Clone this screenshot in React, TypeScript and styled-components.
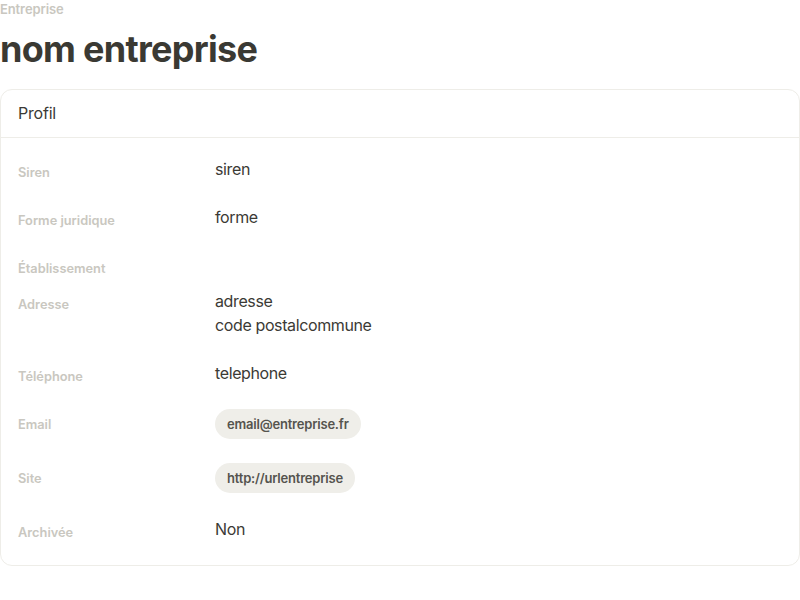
import React from "react";
import styled, { createGlobalStyle } from "styled-components";

const GlobalStyle = createGlobalStyle`
  html, body {
    margin: 0;
    padding: 0;
    background: #fff;
  }
  body {
    font-family: "Inter", "Liberation Sans", sans-serif;
    color: #3b3a35;
  }
`;

const Page = styled.div`
  width: 800px;
  box-sizing: border-box;
`;

const Overline = styled.div`
  font-size: 13px;
  line-height: 18px;
  font-weight: 600;
  letter-spacing: -0.1px;
  color: #c9c7c0;
`;

const Title = styled.h1`
  margin: 9px 0 18px;
  font-size: 36px;
  line-height: 44px;
  font-weight: 700;
  letter-spacing: -0.7px;
  color: #3a3933;
`;

const Card = styled.section`
  border: 1px solid #eeede8;
  border-radius: 12px;
  background: #fff;
`;

const CardHeader = styled.div`
  padding: 11px 17px 12px;
  font-size: 16px;
  line-height: 24px;
  letter-spacing: -0.2px;
  color: #3b3a35;
  border-bottom: 1px solid #eeede8;
`;

const CardBody = styled.div`
  display: flex;
  flex-direction: column;
  padding: 7px 0 12px;
`;

const Row = styled.div<{ $section?: boolean }>`
  display: grid;
  grid-template-columns: 197px 1fr;
  align-items: start;
  padding: 12px 17px ${(p) => (p.$section ? "0" : "12px")};
`;

const Label = styled.div`
  margin-top: 8px;
  font-size: 12.8px;
  line-height: 16px;
  font-weight: 600;
  color: #c9c7c0;
`;

const Value = styled.div`
  font-size: 16px;
  line-height: 24px;
  letter-spacing: -0.38px;
  color: #3b3a35;
`;

const Chip = styled.span`
  display: inline-flex;
  align-items: center;
  height: 30px;
  padding: 0 12px;
  border-radius: 15px;
  background: #efeee9;
  font-size: 13px;
  font-weight: 600;
  letter-spacing: -0.2px;
  color: #55544e;
`;

type Field = {
  label: string;
  value?: React.ReactNode;
  chip?: string;
  section?: boolean;
};

const fields: Field[] = [
  { label: "Siren", value: "siren" },
  { label: "Forme juridique", value: "forme" },
  { label: "Établissement", section: true },
  {
    label: "Adresse",
    value: (
      <>
        adresse
        <br />
        code postalcommune
      </>
    ),
  },
  { label: "Téléphone", value: "telephone" },
  { label: "Email", chip: "email@entreprise.fr" },
  { label: "Site", chip: "http://urlentreprise" },
  { label: "Archivée", value: "Non" },
];

const App = () => {
  return (
    <Page>
      <GlobalStyle />
      <Overline>Entreprise</Overline>
      <Title>nom entreprise</Title>
      <Card>
        <CardHeader>Profil</CardHeader>
        <CardBody>
          {fields.map((f) => (
            <Row key={f.label} $section={f.section}>
              <Label>{f.label}</Label>
              {f.chip ? (
                <div>
                  <Chip>{f.chip}</Chip>
                </div>
              ) : (
                <Value>{f.value}</Value>
              )}
            </Row>
          ))}
        </CardBody>
      </Card>
    </Page>
  );
};

export default App;
